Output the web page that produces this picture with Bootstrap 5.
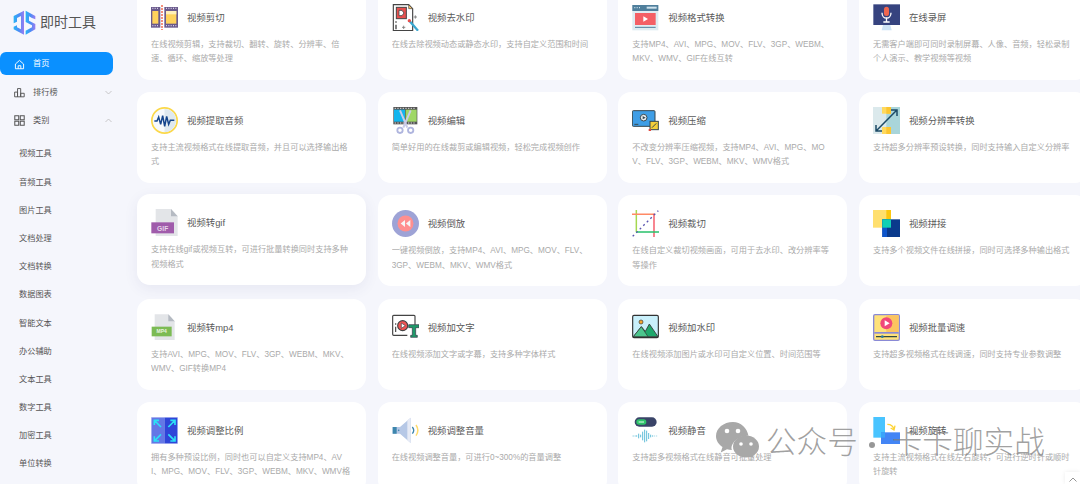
<!DOCTYPE html>
<html lang="zh-CN">
<head>
<meta charset="utf-8">
<title>即时工具</title>
<link href="https://cdn.jsdelivr.net/npm/bootstrap@5.3.0/dist/css/bootstrap.min.css" rel="stylesheet">
<style>
html,body{height:484px;overflow:hidden}
body{background:#f5f6fc;font-family:"Liberation Sans","Noto Sans CJK SC",sans-serif;color:#555;position:relative}
.shell{height:484px;overflow:hidden}
.side{width:137px;flex:none}
.brand{height:52px;padding-left:13px;gap:4px;padding-bottom:8px}
.brand svg{width:23px;height:25px}
.brand span{font-size:14px;color:#555;letter-spacing:0}
.menu{width:113px;gap:5.2px}
.menu .nav-link{height:23px;padding:2px 0 0 14px;font-size:8.2px;color:#555;border-radius:6px 7px 7px 6px;display:flex;align-items:center;gap:8px}
.menu .nav-link svg.ico{width:11px;height:11px;flex:none}
.menu .nav-link.active{background:#0a90ff;color:#fff}
.menu .nav-link .chev{width:7px;height:5px;margin-left:auto;margin-right:1px}
.sub{margin-top:11.7px;gap:5.2px}
.sub a{height:23px;display:flex;align-items:center;padding-left:19px;font-size:8.2px;color:#555;text-decoration:none}
.tools{margin-top:-11.33px;grid-template-columns:repeat(4,229px);grid-auto-rows:91px;column-gap:11.67px;row-gap:12.33px;flex:none}
.tool{background:#fff;border-radius:13px;padding:15px 14px 0;overflow:hidden}
.tool.lifted{transform:translateY(-1px);box-shadow:0 4px 14px rgba(60,70,130,.08);overflow:visible}
.tool-head{gap:9px;height:27px}
.tool-head svg{width:27px;height:27px;flex:none}
.tool-head h6{font-size:9.4px;font-weight:400;color:#5a5a5a;margin:0}
.tool p{font-size:8.2px;line-height:14.3px;max-height:28.6px;overflow:hidden;color:#aaa;margin:7px 0 0;word-break:break-all}
.mark-over{position:absolute;left:716px;top:422px;gap:7px;pointer-events:none;color:rgba(125,125,125,.72);font-family:"Noto Sans CJK SC",sans-serif;font-weight:300;font-size:30.6px;line-height:36px;white-space:nowrap}
.mark-over svg{width:43px;height:36px;flex:none}
.mark-over .dot{display:inline-block;width:6px;height:6px;border-radius:50%;background:rgba(125,125,125,.8);margin:0 17px 0 11px;vertical-align:middle}
.totop{position:absolute;left:1065px;top:472px;width:15px;height:12px;background:#fff;box-shadow:0 0 4px rgba(0,0,0,.08)}
.totop svg{display:block;margin:5px auto 0;width:8px;height:5px}
</style>
</head>
<body>
<div class="shell d-flex">
  <aside class="side d-flex flex-column">
    <div class="brand d-flex align-items-center">
      <svg viewBox="0 0 69 75"><defs><linearGradient id="lg" x1="0" y1="0" x2="1" y2="0"><stop offset="0" stop-color="#27b4f5"/><stop offset=".5" stop-color="#4a8df6"/><stop offset="1" stop-color="#9a7cf0"/></linearGradient></defs><path d="M33 2 L2 18 V40 L12 35 V24 L24 18 V58 L12 52 V46 L2 50 V58 L33 74 V2Z" fill="url(#lg)"/><path d="M38 2 L67 18 V28 L57 24 L48 19 V32 L67 42 V58 L38 74 V62 L57 52 V46 L38 36 Z" fill="url(#lg)"/></svg>
      <span>即时工具</span>
    </div>
    <nav class="nav flex-column menu">
      <a class="nav-link active" href="#"><svg class="ico" viewBox="0 0 14 14" fill="none" stroke="#fff" stroke-width="1.200"><path d="M1.800 6.400 7 1.800l5.200 4.600V12.400H1.800Z"/><path d="M5.300 12.400V8.600h3.400v3.800"/></svg>首页</a>
      <a class="nav-link" href="#"><svg class="ico" viewBox="0 0 14 14" fill="none" stroke="#555" stroke-width="1.200"><path d="M.8 6.500h3.700v6H.8zM4.500 2h4v10.500h-4zM8.500 8h4.500v4.500H8.500z"/></svg>排行榜<svg class="chev" viewBox="0 0 7 5" fill="none" stroke="#bbb" stroke-width=".8"><path d="M.5 1 3.500 4l3-3"/></svg></a>
      <a class="nav-link" href="#"><svg class="ico" viewBox="0 0 14 14" fill="none" stroke="#555" stroke-width="1.300"><path d="M1 1h5v5H1zM8 1h5v5H8zM1 8h5v5H1zM8 8h5v5H8z"/></svg>类别<svg class="chev" viewBox="0 0 7 5" fill="none" stroke="#bbb" stroke-width=".8"><path d="M.5 4 3.500 1l3 3"/></svg></a>
    </nav>
    <div class="sub d-flex flex-column">
      <a href="#">视频工具</a><a href="#">音频工具</a><a href="#">图片工具</a><a href="#">文档处理</a><a href="#">文档转换</a><a href="#">数据图表</a><a href="#">智能文本</a><a href="#">办公辅助</a><a href="#">文本工具</a><a href="#">数字工具</a><a href="#">加密工具</a><a href="#">单位转换</a>
    </div>
  </aside>
  <main class="tools d-grid">

    <div class="tool"><div class="tool-head d-flex align-items-center">
      <svg viewBox="0 0 81 81"><rect y="9" width="28" height="62" fill="#6a5a8c"/><rect x="40" y="9" width="41" height="62" fill="#6a5a8c"/><rect x="4" y="21" width="18" height="38" fill="#ffd35c"/><rect x="45" y="21" width="31" height="38" fill="#ffd35c"/><rect x="45" y="21" width="31" height="10" fill="#fff0b8"/><path d="M4 13h3M11 13h3M18 13h3M4 65h3M11 65h3M18 65h3M45 13h3M52 13h3M59 13h3M66 13h3M73 13h3M45 65h3M52 65h3M59 65h3M66 65h3M73 65h3" stroke="#d8d0e8" stroke-width="4"/><path d="M33 3V78" stroke="#f05a3c" stroke-width="4" stroke-dasharray="6 3"/></svg>
      <h6>视频剪切</h6></div><p>在线视频剪辑，支持裁切、翻转、旋转、分辨率、倍速、循环、缩放等处理</p></div>

    <div class="tool"><div class="tool-head d-flex align-items-center">
      <svg viewBox="0 0 81 81"><path d="M4 2H50L62 14V80H4Z" fill="#fff" stroke="#444" stroke-width="3.500"/><path d="M50 2V14H62Z" fill="#f5c26b" stroke="#444" stroke-width="2"/><rect x="13" y="10" width="30" height="34" fill="#e8504f" stroke="#444" stroke-width="3"/><path d="M21 19h9l6 8-6 8h-9Z" fill="#fff" stroke="#444" stroke-width="2.500"/><path d="M12 52v4M12 62v14" stroke="#444" stroke-width="4"/><path d="M30 70h10M35 65v10M70 34v10M65 39h10" stroke="#777" stroke-width="2.500"/><path d="M52 50 78 80" stroke="#3aa7d0" stroke-width="7"/><circle cx="52" cy="50" r="5" fill="#e8504f"/></svg>
      <h6>视频去水印</h6></div><p>在线去除视频动态或静态水印，支持自定义范围和时间</p></div>

    <div class="tool"><div class="tool-head d-flex align-items-center">
      <svg viewBox="0 0 81 81"><rect x="1" y="3" width="78" height="76" fill="#dfecf2"/><rect x="1" y="3" width="78" height="18" fill="#4f7f9c"/><rect x="44" y="8" width="30" height="6" fill="#cfe3ee"/><path d="M7 11h3M14 11h3M21 11h3" stroke="#cfe3ee" stroke-width="4"/><rect x="9" y="27" width="62" height="36" fill="#f45f65"/><path d="M34 37 48 45 34 53Z" fill="#fff"/><path d="M9 70H71" stroke="#4f7f9c" stroke-width="3"/></svg>
      <h6>视频格式转换</h6></div><p>支持MP4、AVI、MPG、MOV、FLV、3GP、WEBM、MKV、WMV、GIF在线互转</p></div>

    <div class="tool"><div class="tool-head d-flex align-items-center">
      <svg viewBox="0 0 81 81"><rect x="1" y="1" width="80" height="62" fill="#36437f"/><path d="M30 63h22l4 16H26Z" fill="#cfe4f6"/><rect x="33" y="8" width="15" height="28" rx="7.500" fill="#f0664e"/><path d="M27 26c0 22 27 22 27 0M40.500 40V54M31 54H50" fill="none" stroke="#fff" stroke-width="4"/></svg>
      <h6>在线录屏</h6></div><p>无需客户端即可同时录制屏幕、人像、音频，轻松录制个人演示、教学视频等视频</p></div>

    <div class="tool"><div class="tool-head d-flex align-items-center">
      <svg viewBox="0 0 81 81"><circle cx="40.500" cy="40.500" r="38" fill="#f7fafc" stroke="#fbd84a" stroke-width="5"/><path d="M40.500 6a34 34 0 0 1 0 69Z" fill="#dfe9ef"/><path d="M10 42h8l5-12 6 22 6-26 6 32 6-30 6 24 5-12h12" fill="none" stroke="#14458c" stroke-width="4.500"/></svg>
      <h6>视频提取音频</h6></div><p>支持主流视频格式在线提取音频，并且可以选择输出格式</p></div>

    <div class="tool"><div class="tool-head d-flex align-items-center">
      <svg viewBox="0 0 81 81"><rect x="4" y="0" width="72" height="52" fill="#555"/><rect x="6" y="8" width="33" height="36" fill="#12b5ee"/><rect x="41" y="8" width="33" height="36" fill="#9fd765"/><path d="M8 4h4M16 4h4M24 4h4M32 4h4M40 4h4M48 4h4M56 4h4M64 4h4M8 48h4M16 48h4M24 48h4M32 48h4M40 48h4M48 48h4M56 48h4M64 48h4" stroke="#ddd" stroke-width="3"/><path d="M24 10 46 62M56 10 34 62" stroke="#c9cbe8" stroke-width="6"/><circle cx="24" cy="70" r="8" fill="none" stroke="#afb5de" stroke-width="5.500"/><circle cx="56" cy="70" r="8" fill="none" stroke="#afb5de" stroke-width="5.500"/></svg>
      <h6>视频编辑</h6></div><p>简单好用的在线裁剪或编辑视频，轻松完成视频创作</p></div>

    <div class="tool"><div class="tool-head d-flex align-items-center">
      <svg viewBox="0 0 81 81"><rect x="1" y="11" width="68" height="47" rx="3" fill="#3f9ee6" stroke="#37474f" stroke-width="3"/><circle cx="35" cy="32" r="10" fill="#e8eef2" stroke="#37474f" stroke-width="3"/><path d="M32 27 41 32 32 37Z" fill="#37474f"/><path d="M7 52h12" stroke="#37474f" stroke-width="3"/><rect x="54" y="43" width="25" height="25" fill="#f5cf3a" stroke="#37474f" stroke-width="3"/><path d="M60 62 73 49" stroke="#37474f" stroke-width="3"/><rect x="50" y="66" width="7" height="6" fill="#e0483e"/></svg>
      <h6>视频压缩</h6></div><p>不改变分辨率压缩视频，支持MP4、AVI、MPG、MOV、FLV、3GP、WEBM、MKV、WMV格式</p></div>

    <div class="tool"><div class="tool-head d-flex align-items-center">
      <svg viewBox="0 0 81 81"><rect width="81" height="81" fill="#dbe9ec"/><path d="M40 0H81V81H40Z" fill="#a9d5da"/><rect x="27" y="0" width="27" height="20" fill="#ffd95e"/><rect x="27" y="60" width="27" height="21" fill="#ffd95e"/><path d="M40 0h14v20H40zM40 60h14v21H40z" fill="#fbc531"/><path d="M10 71 71 10M54 9h18v18M9 54v18h18" fill="none" stroke="#1c4a66" stroke-width="4.500"/></svg>
      <h6>视频分辨率转换</h6></div><p>支持超多分辨率预设转换，同时支持输入自定义分辨率</p></div>

    <div class="tool lifted"><div class="tool-head d-flex align-items-center">
      <svg viewBox="0 0 81 81"><path d="M14 0H60L80 22V81H14Z" fill="#e3e5e8"/><path d="M60 0V22H80Z" fill="#b5bac2"/><rect x="1" y="40" width="68" height="33" fill="#a05cab"/><text x="35" y="65" font-size="20" font-weight="700" fill="#e6d6ea" text-anchor="middle" font-family="Liberation Sans,sans-serif">GIF</text></svg>
      <h6>视频转gif</h6></div><p>支持在线gif或视频互转，可进行批量转换同时支持多种视频格式</p></div>

    <div class="tool"><div class="tool-head d-flex align-items-center">
      <svg viewBox="0 0 81 81"><circle cx="40.500" cy="40.500" r="40.500" fill="#9ea3d6"/><circle cx="40.500" cy="40.500" r="24" fill="#ff8f8f"/><path d="M39 30 26 40.500 39 51ZM55 30 42 40.500 55 51Z" fill="#f6f6f6"/></svg>
      <h6>视频倒放</h6></div><p>一键视频倒放，支持MP4、AVI、MPG、MOV、FLV、<span class="text-nowrap">3GP</span>、WEBM、MKV、WMV格式</p></div>

    <div class="tool"><div class="tool-head d-flex align-items-center">
      <svg viewBox="0 0 81 81"><path d="M13 0V66" stroke="#a5d84f" stroke-width="4.500"/><path d="M0 13H68" stroke="#ff8a65" stroke-width="4.500"/><path d="M66 11V81" stroke="#f4495a" stroke-width="4"/><path d="M13 66H81" stroke="#27c16a" stroke-width="4.500"/><path d="M2 79 79 2" stroke="#5a55b0" stroke-width="4" stroke-dasharray="6 9"/></svg>
      <h6>视频裁切</h6></div><p>在线自定义裁切视频画面，可用于去水印、改分辨率等等操作</p></div>

    <div class="tool"><div class="tool-head d-flex align-items-center">
      <svg viewBox="0 0 81 81"><rect width="54" height="53" fill="#ffdf6e"/><rect x="40" width="14" height="28" fill="#fcc60f"/><rect x="28" y="28" width="54" height="53" fill="#0a3a8c"/><rect x="28" y="28" width="14" height="53" fill="#0d55cb"/><rect x="28" y="28" width="26" height="25" fill="#0fd0b4"/></svg>
      <h6>视频拼接</h6></div><p>支持多个视频文件在线拼接，同时可选择多种输出格式</p></div>

    <div class="tool"><div class="tool-head d-flex align-items-center">
      <svg viewBox="0 0 81 81"><path d="M11 1H52L71 22V78H11Z" fill="#e3e5e8"/><path d="M52 1V22H71Z" fill="#b5bac2"/><rect x="2" y="38" width="60" height="29" fill="#7cbb54"/><text x="32" y="58" font-size="15" font-weight="700" fill="#e9f4e1" text-anchor="middle" font-family="Liberation Sans,sans-serif">MP4</text></svg>
      <h6>视频转mp4</h6></div><p>支持AVI、MPG、MOV、FLV、3GP、WEBM、MKV、WMV、GIF转换MP4</p></div>

    <div class="tool"><div class="tool-head d-flex align-items-center">
      <svg viewBox="0 0 81 81"><path d="M46 64H5a3 3 0 0 1-3-3V7a3 3 0 0 1 3-3H66a3 3 0 0 1 3 3V32" fill="#fff" stroke="#444" stroke-width="3.500"/><path d="M11 28v4M11 38v16" stroke="#444" stroke-width="3.500"/><circle cx="32" cy="35" r="15" fill="#f05454" stroke="#444" stroke-width="3.500"/><path d="M28 27 40 35 28 43Z" fill="#fff" stroke="#444" stroke-width="2"/><path d="M50 32H81V41H71V64H76V70H56V64H61V41H50Z" fill="#1f9a6a" stroke="#334" stroke-width="2"/></svg>
      <h6>视频加文字</h6></div><p>在线视频添加文字或字幕，支持多种字体样式</p></div>

    <div class="tool"><div class="tool-head d-flex align-items-center">
      <svg viewBox="0 0 81 81"><rect x="2" y="4" width="77" height="67" rx="4" fill="#c9f0fb" stroke="#333" stroke-width="3.500"/><circle cx="27" cy="24" r="6" fill="#f6a72e" stroke="#333" stroke-width="2"/><path d="M4 68 28 38 40 52 52 30 78 68Z" fill="#1fa86c" stroke="#333" stroke-width="2.500"/><path d="M4 68 28 38 48 68Z" fill="#4cc68d" stroke="#333" stroke-width="2"/></svg>
      <h6>视频加水印</h6></div><p>在线视频添加图片或水印可自定义位置、时间范围等</p></div>

    <div class="tool"><div class="tool-head d-flex align-items-center">
      <svg viewBox="0 0 81 81"><rect x="2" y="2" width="77" height="77" rx="4" fill="#ffe27a" stroke="#8a8ad6" stroke-width="4"/><path d="M40 4H77V54H40Z" fill="#fcc460"/><rect x="4" y="54" width="73" height="5" fill="#8a8ad6"/><circle cx="40" cy="28" r="18" fill="#f0487a"/><path d="M35 19 50 28 35 37Z" fill="#fff"/><path d="M9 68H72" stroke="#314a44" stroke-width="4"/><circle cx="28" cy="68" r="4" fill="#2b7ea1"/></svg>
      <h6>视频批量调速</h6></div><p>支持超多视频格式在线调速，同时支持专业参数调整</p></div>

    <div class="tool"><div class="tool-head d-flex align-items-center">
      <svg viewBox="0 0 81 81"><rect width="81" height="81" fill="#c7cdf5"/><rect x="2" y="2" width="39" height="77" fill="#6477e6"/><rect x="41" y="2" width="38" height="77" fill="#2f45d8"/><path d="M30 30 12 12M10 24V10h14M52 30 70 12M58 10h14v14M30 52 12 70M10 58v14h14M52 52 70 70M72 58v14H58" fill="none" stroke="#2ce0f5" stroke-width="5"/></svg>
      <h6>视频调整比例</h6></div><p>拥有多种预设比例，同时也可以自定义支持MP4、AVI、MPG、MOV、FLV、3GP、WEBM、MKV、WMV格式</p></div>

    <div class="tool"><div class="tool-head d-flex align-items-center">
      <svg viewBox="0 0 81 81"><path d="M2 30H24L56 2V78L24 50H2Z" fill="#b6c8e6"/><path d="M2 30H14V50H2Z" fill="#3d86ad"/><path d="M56 2V78L46 70V10Z" fill="#e6eaf5"/><circle cx="20" cy="40" r="2.500" fill="#3d86ad"/><path d="M61 30c5 6 5 14 0 20" fill="none" stroke="#3d86ad" stroke-width="4"/><path d="M72 24c7 10 7 22 0 32" fill="none" stroke="#ffdb6b" stroke-width="4.500"/></svg>
      <h6>视频调整音量</h6></div><p>在线视频调整音量，可进行0~300%的音量调整</p></div>

    <div class="tool"><div class="tool-head d-flex align-items-center">
      <svg viewBox="0 0 81 81"><rect x="8" y="1" width="66" height="28" rx="14" fill="#3a4468"/><rect x="13" y="7" width="30" height="16" rx="8" fill="#2fc46a"/><path d="M20 15h16" stroke="#e5fff0" stroke-width="3"/><path d="M2 57h3M8 57h3M14 55v4M20 50v14M26 53v8M32 44v26M38 38v38M44 41v32M50 48v18M56 53v8M62 55v4M68 56v2M74 56v2" stroke="#62bdd8" stroke-width="3"/></svg>
      <h6>视频静音</h6></div><p>支持超多视频格式在线静音可批量处理</p></div>

    <div class="tool"><div class="tool-head d-flex align-items-center">
      <svg viewBox="0 0 81 81"><rect x="1" y="0" width="35" height="62" fill="#49c4ff"/><rect x="24" y="46" width="57" height="35" fill="#4385f5"/><rect x="24" y="46" width="12" height="16" fill="#3aa4fa"/><path d="M43 22c10 0 18 6 20 16M66 26l-3 13-10-6" fill="none" stroke="#fdd335" stroke-width="4"/></svg>
      <h6>视频旋转</h6></div><p>支持主流视频格式在线左右旋转，可进行逆时针或顺时针旋转</p></div>
  </main>
</div>
<div class="mark-over d-flex align-items-center">
  <svg viewBox="0 0 43 36"><path d="M17 0C7.600 0 0 6.300 0 14c0 4.500 2.500 8.400 6.500 11L4.700 30.500l6.300-3.300c1.500.4 3.200.7 4.900.7C15 26 15.500 24 16.600 22 19.500 16.800 25.500 13.500 32.500 13.800 31 6 24.800 0 17 0Z" fill="#a8a8a8"/><ellipse cx="30" cy="24.500" rx="13" ry="11" fill="#a8a8a8"/><path d="M36 33l2 3-5-1.500Z" fill="#a8a8a8"/><circle cx="11" cy="9" r="2.300" fill="#fff"/><circle cx="22" cy="9" r="2.300" fill="#fff"/><circle cx="25" cy="22" r="1.800" fill="#fff"/><circle cx="35" cy="22" r="1.800" fill="#fff"/></svg>
  <span>公众号<i class="dot"></i>卡卡聊实战</span>
</div>
<div class="totop"><svg viewBox="0 0 8 5" fill="none" stroke="#888" stroke-width=".9"><path d="M.5 4.500 4 1l3.500 3.500"/></svg></div>
</body>
</html>
